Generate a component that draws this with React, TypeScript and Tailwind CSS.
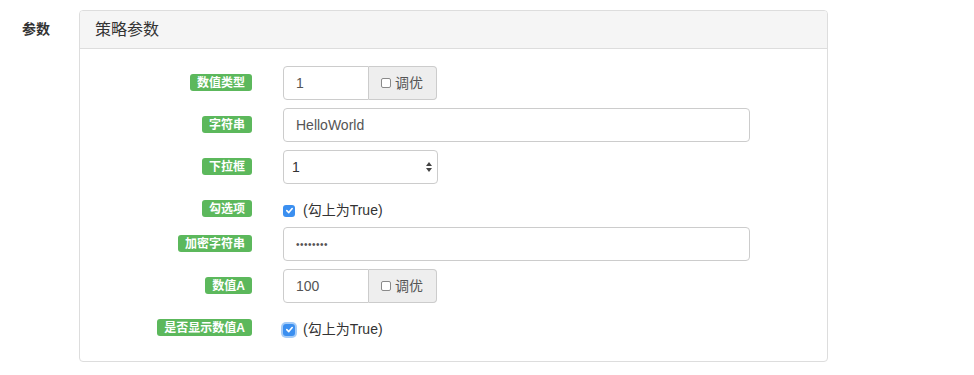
import React from 'react';

const FONT = { fontFamily: '"Liberation Sans", "Noto Sans CJK SC", sans-serif' };

function Badge({ text }: { text: string }) {
  return (
    <span className="inline-flex h-[17px] items-center rounded-[3px] bg-[#5cb85c] px-[7px] text-[12px] font-bold leading-none text-white">
      {text}
    </span>
  );
}

function Row({ label, children, check }: { label: string; children: React.ReactNode; check?: boolean }) {
  return (
    <div className={`flex items-start ${check ? 'h-[27px]' : 'h-[34px]'}`}>
      <div className="flex w-[172px] shrink-0 justify-end pt-[8px]">
        <Badge text={label} />
      </div>
      <div className="ml-[31px]">{children}</div>
    </div>
  );
}

function TextBox({ value, w }: { value: string; w: string }) {
  return (
    <div className={`flex h-[34px] items-center rounded-[4px] border border-[#ccc] bg-white px-[12px] text-[14px] text-[#555] ${w}`}>
      {value}
    </div>
  );
}

function Tune({ value }: { value: string }) {
  return (
    <div className="flex h-[34px] w-[154px]">
      <div className="flex w-[86px] items-center rounded-l-[4px] border border-[#ccc] bg-white px-[12px] text-[14px] text-[#555]">
        {value}
      </div>
      <div className="flex flex-1 items-center gap-[4px] rounded-r-[4px] border border-l-0 border-[#ccc] bg-[#eee] pl-[12px] text-[14px] text-[#555]">
        <span className="h-[10px] w-[10px] rounded-[2px] border border-[#8a8a8a] bg-white" />
        <span>调优</span>
      </div>
    </div>
  );
}

function Checked({ focus }: { focus?: boolean }) {
  return (
    <div className="flex items-center gap-[8px] pt-[8px] text-[14px] text-[#333]">
      <span
        className={`flex h-[12px] w-[12px] items-center justify-center rounded-[3px] bg-[#3b8ff0] ${
          focus ? 'shadow-[0_0_0_2px_rgba(90,160,240,0.55)]' : ''
        }`}
      >
        <svg width="9" height="9" viewBox="0 0 10 10" fill="none">
          <polyline points="2 5.2 4.2 7.3 8 2.8" stroke="#fff" strokeWidth="1.8" strokeLinecap="round" strokeLinejoin="round" />
        </svg>
      </span>
      <span>(勾上为True)</span>
    </div>
  );
}

export default function App() {
  return (
    <div className="flex h-[375px] w-[974px] bg-white" style={FONT}>
      <div className="w-[79px] shrink-0 pl-[22px] pt-[19px] text-[14px] font-bold text-[#333]">参数</div>
      <div className="mt-[10px] h-[352px] w-[749px] overflow-hidden rounded-[4px] border border-[#ddd]">
        <div className="flex h-[38px] items-center border-b border-[#ddd] bg-[#f5f5f5] px-[15px] text-[16px] text-[#333]">
          策略参数
        </div>
        <div className="flex flex-col gap-[8px] pt-[17px]">
          <Row label="数值类型">
            <Tune value="1" />
          </Row>
          <Row label="字符串">
            <TextBox value="HelloWorld" w="w-[467px]" />
          </Row>
          <Row label="下拉框">
            <div className="flex h-[34px] w-[155px] items-center justify-between rounded-[4px] border border-[#ccc] bg-white pl-[8px] pr-[4px] text-[14px] text-[#333]">
              <span>1</span>
              <svg width="8" height="12" viewBox="0 0 8 12">
                <path d="M4 1 L7 5 L1 5 Z" fill="#444" />
                <path d="M4 11 L7 7 L1 7 Z" fill="#444" />
              </svg>
            </div>
          </Row>
          <Row label="勾选项" check>
            <Checked />
          </Row>
          <Row label="加密字符串">
            <div className="flex h-[34px] w-[467px] items-center rounded-[4px] border border-[#ccc] bg-white px-[12px] text-[10px] tracking-[0.5px] text-[#555]">
              ••••••••
            </div>
          </Row>
          <Row label="数值A">
            <Tune value="100" />
          </Row>
          <Row label="是否显示数值A" check>
            <Checked focus />
          </Row>
        </div>
      </div>
    </div>
  );
}
